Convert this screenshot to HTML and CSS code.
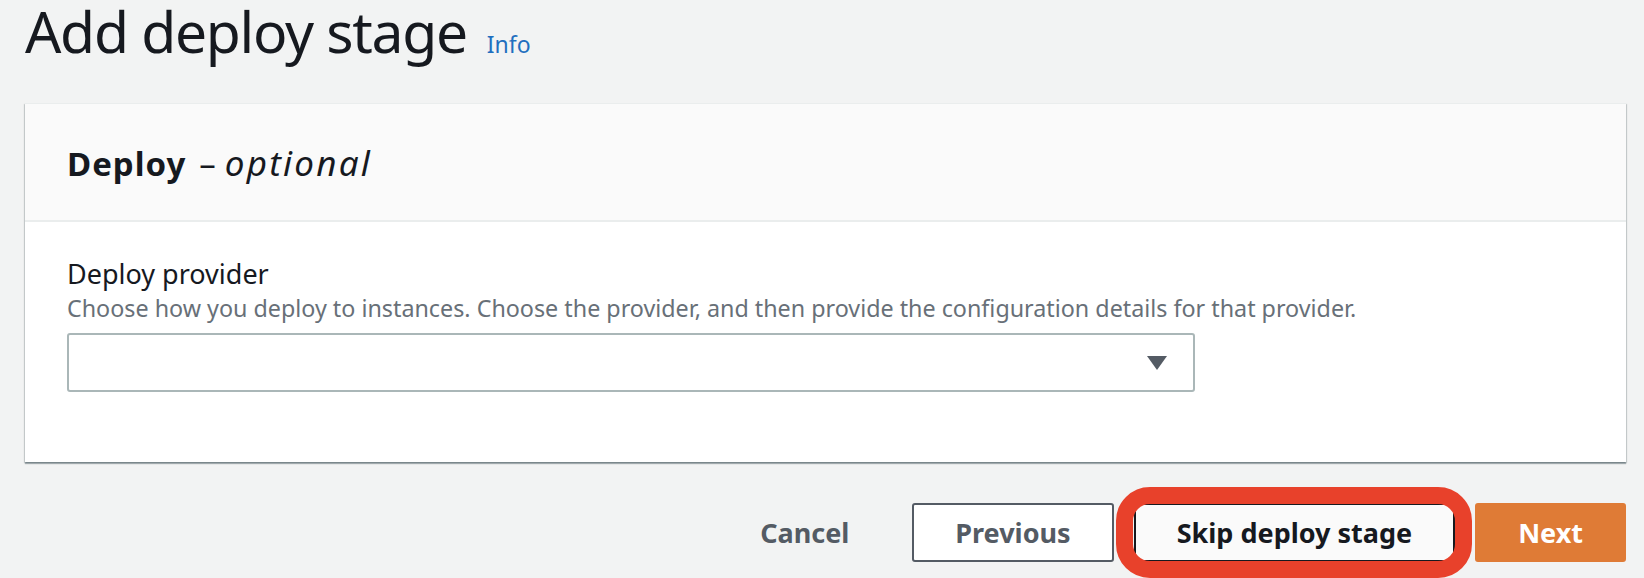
FILE: index.html
```html
<!DOCTYPE html>
<html lang="en">
<head>
<meta charset="utf-8">
<title>Add deploy stage</title>
<link rel="stylesheet" href="styles.css">
</head>
<body>
<div class="page">
  <div class="title-row">
    <h1 class="title">Add deploy stage</h1>
    <a class="info" href="#">Info</a>
  </div>

  <section class="panel">
    <div class="panel-header">
      <h2 class="panel-title"><span class="strong">Deploy</span><span class="dash">–</span><em>optional</em></h2>
    </div>
    <div class="panel-body">
      <div class="field-label">Deploy provider</div>
      <div class="field-desc">Choose how you deploy to instances. Choose the provider, and then provide the configuration details for that provider.</div>
      <div class="select">
        <svg class="caret" width="20" height="14" viewBox="0 0 20 14"><path d="M0 0 H20 L10 14 Z" fill="#545b64"/></svg>
      </div>
    </div>
  </section>

  <div class="actions">
    <button class="btn btn-link">Cancel</button>
    <button class="btn btn-normal">Previous</button>
    <div class="highlight-wrap">
      <button class="btn btn-skip">Skip deploy stage</button>
      <span class="highlight"></span>
    </div>
    <button class="btn btn-primary">Next</button>
  </div>
</div>
</body>
</html>
```

FILE: styles.css
```css
html, body {
  margin: 0;
  padding: 0;
  background: #f2f3f3;
}

body {
  font-family: "Noto Sans", "Open Sans", "Liberation Sans", sans-serif;
  color: #16191f;
  min-height: 578px;
}

.page {
  padding: 0 18px 0 25px;
}

.title-row {
  display: flex;
  align-items: baseline;
  gap: 20px;
  height: 62px;
}

.title {
  margin: 0;
  font-size: 57px;
  line-height: 62px;
  font-weight: 400;
  letter-spacing: -1.3px;
  color: #16191f;
}

.info {
  font-size: 23px;
  color: #1f6fbf;
  text-decoration: none;
}

.panel {
  margin-top: 41px;
  background: #ffffff;
  border-top: 1px solid #eaeded;
  box-shadow: 0 2px 1px 0 rgba(0, 28, 36, 0.3), 1px 1px 1px 0 rgba(0, 28, 36, 0.15), -1px 1px 1px 0 rgba(0, 28, 36, 0.15);
}

.panel-header {
  background: #fafafa;
  padding: 39px 40px 36px 42px;
  border-bottom: 2px solid #eaeded;
}

.panel-title {
  margin: 0;
  font-size: 33px;
  line-height: 40px;
  font-weight: 400;
  color: #16191f;
  display: flex;
  align-items: baseline;
}

.panel-title .strong {
  font-weight: 700;
  letter-spacing: 1px;
}

.panel-title .dash {
  font-weight: 400;
  margin: 0 9px 0 13px;
}

.panel-title em {
  font-size: 35px;
  font-weight: 400;
  font-style: italic;
  letter-spacing: 2.2px;
}

.panel-body {
  padding: 34px 42px 70px 42px;
}

.field-label {
  font-size: 27px;
  line-height: 36px;
  color: #16191f;
}

.field-desc {
  font-size: 23.3px;
  line-height: 32px;
  color: #687078;
}

.select {
  margin-top: 9px;
  width: 1128px;
  height: 59px;
  box-sizing: border-box;
  border: 2px solid #aab7b8;
  border-radius: 3px;
  background: #ffffff;
  display: flex;
  align-items: center;
  justify-content: flex-end;
  padding-right: 26px;
}

.caret {
  display: block;
}

.actions {
  margin-top: 41px;
  display: flex;
  justify-content: flex-end;
  align-items: center;
  gap: 20px;
}

.btn {
  font-family: "Noto Sans", "Open Sans", "Liberation Sans", sans-serif;
  font-size: 27px;
  font-weight: 700;
  height: 59px;
  padding: 0 41px;
  border-radius: 3px;
  border: 2px solid transparent;
  background: transparent;
  cursor: pointer;
  line-height: 1;
}

.btn-link {
  color: #545b64;
}

.btn-normal {
  background: #ffffff;
  border-color: #545b64;
  color: #545b64;
}

.highlight-wrap {
  position: relative;
  display: flex;
}

.btn-skip {
  background: #fafafa;
  border-color: #16191f;
  color: #16191f;
}

.btn-primary {
  background: #df7b36;
  border-color: #df7b36;
  color: #ffffff;
}

.highlight {
  position: absolute;
  left: -18px;
  right: -17px;
  top: -16px;
  bottom: -16px;
  border: 17px solid #e8412b;
  border-radius: 34px;
  pointer-events: none;
}
```
